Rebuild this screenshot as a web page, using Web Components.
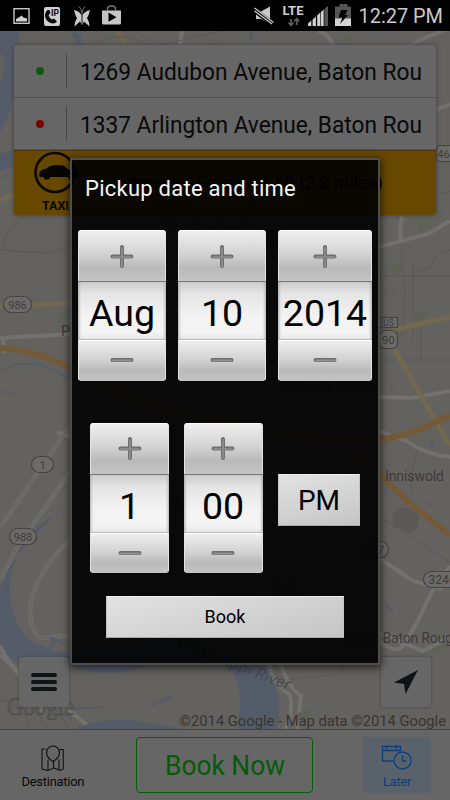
<!DOCTYPE html>
<html lang="en">
<head>
<meta charset="utf-8">
<title>Pickup date and time</title>
<style>
html,body{margin:0;width:450px;height:800px;overflow:hidden;background:#000;font-family:Roboto,"Noto Sans",sans-serif}
</style>
</head>
<body>
<taxi-screen></taxi-screen>
<script>
const define = (name, html, setup) => customElements.define(name, class extends HTMLElement {
  connectedCallback() {
    if (this.shadowRoot) return;
    const t = document.createElement('template');
    t.innerHTML = html;
    this.attachShadow({mode: 'open'}).append(t.content.cloneNode(true));
    if (setup) setup(this, this.shadowRoot);
  }
});

define('status-bar', `
<style>
:host{display:block;height:31px;background:#000}
svg{display:block}
</style>
<svg width="450" height="31" font-family="Roboto,sans-serif">
  <rect x="14" y="8.700" width="15" height="14.600" fill="none" stroke="#c6c6c6" stroke-width="1.400"/>
  <path d="M16 21.500V19l3-1.500 2.500-2 2 2 3.500 1v3z" fill="#d2d2d2"/>
  <rect x="44" y="7" width="16" height="19" rx="2" fill="#cfcfcf"/>
  <path d="M47.500 10c-3.500 3-3.500 8.500 1 11.800 3 2.200 6.500 2.200 8.500-.3l-3-3-2 1c-2-1-3.300-2.700-3.300-4.700l1.800-1.500-1-3.300z" fill="#080808"/>
  <text x="51" y="15.500" font-size="8.500" font-weight="700" textLength="8" fill="#080808">IP</text>
  <path d="M74 10q5 1 7.500 5V24.500l-1.500-3-5.500 5q0-5 2.500-8.500-2-3-3-8zM90 10q-5 1-7.500 5v9.500l1.500-3 5.500 5q0-5-2.500-8.500 2-3 3-8z" fill="#c9c9c9"/>
  <path d="M82 25V12M81.500 12q0-4.500-3-5.500M82.500 12q0-4.500 3-5.500" stroke="#717171" fill="none"/>
  <path d="M102 10.500h19v12.500q0 1.500-1.500 1.500h-16q-1.500 0-1.500-1.500z" fill="#c5c5c5"/>
  <path d="M107.500 11V9q0-3 4-3t4 3v2" stroke="#777" stroke-width="1.400" fill="none"/>
  <path d="M108.500 12.500l8 4.700-8 4.500z" fill="#000"/>
  <path d="M256 11.500h5l9-5v17.500l-9-5h-5z" fill="#cacaca"/>
  <path d="M253.500 9.500l20 15" stroke="#000" stroke-width="5"/>
  <path d="M254.500 8l19 14.500M254.500 11l17.500 13" stroke="#cacaca" stroke-width="1.300"/>
  <text x="282.500" y="15" font-size="13" font-weight="700" textLength="21" lengthAdjust="spacingAndGlyphs" fill="#d0d0d0">LTE</text>
  <path d="M291 19v6M288.500 22.500l2.500 3 2.500-3M296.800 25v-6M294.300 21.500l2.500-3 2.500 3" stroke="#5c5c5c" stroke-width="1.700" fill="none"/>
  <path d="M308 26v-2.500l3.300-3V26zM312.600 26v-6.500l3.300-3V26zM317.200 26V15.300l3.100-2.800V26zM320.900 26V12l2.800-2.600V26z" fill="#d0d0d0"/>
  <path d="M324.400 26V9l3.600-3.200V26z" fill="#555"/>
  <path d="M335 6.500h4.500V4h8v2.500h3.500v13h-16z" fill="#555"/>
  <path d="M335 18.500h16V26h-16z" fill="#d3d3d3"/>
  <path d="M341 10h6.500l-2.500 5h3l-8 9 2.500-6.500h-4z" fill="#050505"/>
  <text x="358.500" y="23" font-size="21" textLength="84.500" lengthAdjust="spacingAndGlyphs" fill="#cacaca">12:27 PM</text>
</svg>`);

define('city-map', `
<style>
:host{display:block;height:698px;background:#64625e}
svg{display:block}
.w{stroke:#72716e;fill:none;stroke-width:4}
.wi{stroke:#696765;fill:none;stroke-width:2}
.t{stroke:#5b5957;fill:none;stroke-width:1}
.r{fill:#555c69}
.y{stroke:#70694f;fill:none;stroke-width:5}
.o{stroke:#745a39;fill:none;stroke-width:6}
.g{fill:#5c6254}
.s rect{fill:#6c6b69;stroke:#454442;stroke-width:1.200}
text{fill:#3d3c3a}
</style>
<svg width="450" height="698" viewBox="0 31 450 698" font-family="Roboto,sans-serif">
  <path class="r" d="M0 31h20C15 55 20 105 0 132z"/>
  <path d="M0 52q7 8 2 26l-2 4z" fill="#64625e"/>
  <path class="r" d="M0 154l15-5v17l-15 5z"/>
  <path d="M73 31q7 20 27 25" stroke="#555c69" stroke-width="5" fill="none"/>
  <path d="M0 201l16-8" class="y"/>
  <path d="M0 179l20-8" stroke="#555c69" fill="none"/>
  <path d="M117 31q8 10 11 24" class="y"/>
  <path d="M182 31l-4 27M318 31q14 3 18 25M400 58q0-12 50-30M430 112l20-8" class="w"/>
  <path d="M90 45q28-16 60 0t70-5M140 35l20 10 65-15" class="t"/>
  <path class="g" d="M344 36h8l-3 5h-9z"/>
  <path class="t" d="M22 216l-16 19q-5 8 3 16l41 2 20-6M0 250h10"/>
  <path class="y" d="M0 307l72-4q100 0 165 22t153 6"/>
  <path class="w" d="M0 338l72-4h80M3 338l1 15"/>
  <path class="o" d="M0 348q40 3 72 21 80 48 175 55 70 20 134 15"/>
  <path d="M0 371q35-19 72 11" fill="none" stroke="#555c69" stroke-width="1.500"/>
  <path d="M0 391l14 4" fill="none" stroke="#555c69" stroke-width="1.500"/>
  <path class="w" d="M0 528l42-62 30-43M57 432l14 5M0 580l21-40 24-32 20-29 9-12"/>
  <path class="wi" d="M0 528l42-62 30-43M0 580l21-40 24-32 20-29 9-12"/>
  <path class="r" d="M72 498C37 534 10 555 0 590v58q12 17 40 18h30q45 16 90-5l65 5q22 15 12 63h40q12-62-40-77l-80-10-100 10-30-13q-25-30-13-75 12-38 43-49z"/>
  <path class="w" d="M76 537q-25 15-40 49-9 20-4 39 3 13 11 13l28-3"/>
  <path class="wi" d="M76 537q-25 15-40 49-9 20-4 39 3 13 11 13l28-3"/>
  <path class="w" d="M0 646q18 36 42 45 22 15 50 38M0 655q35 27 44 60"/>
  <path class="t" d="M0 700q25 4 30 29M15 700q12-7 33 29M30 692q25 10 38 36"/>
  <path d="M45 653l10-9-4-6 14 6M60 710l12 10M73 709l28-2M152 705l17-8-8 7 12-8" stroke="#555c69" stroke-width="2" fill="none"/>
  <path class="r" d="M75 729q30-15 75-6l33 6z"/>
  <path class="w" d="M270 659q-3 21 20 36 4 20-5 34M279 660q9 28 22 36l-4 33"/>
  <path class="t" d="M290 679l45-4q10-3 9-14"/>
  <path class="g" d="M297 713l15-4-3 9-11 3zM430 648l15-3-7 9zM388 266l14-3v10l-11 2zM391 287l4-3 2 8-5 2zM414 314l12-4 3 7-13 6zM416 219l7-2 5 7-8 9zM58 313l14-2v7l-12 1z"/>
  <path class="w" d="M402 216q-3 13-1 24M375 248l53-14 22-13M375 397l37 1 38-7M375 429q17 7 31 12 18 13 44 16M375 556q24 15 38 25l30 8M450 566q-20 25-29 49-12 23-21 34-12 2-25-12M448 638l-25 13-47-19"/>
  <path class="t" d="M402 246v20l3 25-3 46M413 262v80M375 276h75M421 322v38M375 360h75M375 354q7 20 20 40M375 514l75 48M450 250q-17 1-19 18l-20 5M418 449q-8 22-6 43M420 171q10 30 30 20"/>
  <path class="y" d="M390 331l60-14M392 345l24 42 34 59"/>
  <path class="o" d="M345 452q15 2 62 49l43 34"/>
  <path class="o" d="M381 439q30-3 69-24M381 439h12"/>
  <path d="M393 515q6-8 14-8l13 8-3 14-8 5-15-9z" fill="#5a5957"/>
  <path class="r" d="M428 447l4-8 4 8zM77 34h4v6h-4zM249 32h4v8h-4zM429 448l5 4zM384 603l6 3 3 6-4-2zM404 620l8 7-3-1M425 504l6-2 3 6-4-3M440 213l3 4-4 1z"/>
  <path d="M437 520q-6 15 0 38M445 160q-9 26-3 45" stroke-dasharray="5 3" fill="none" stroke="#5a616a"/>
  <g class="s" font-size="11" text-anchor="middle">
    <rect x="3.500" y="296.500" width="28" height="16" rx="8"/><text x="17.500" y="308.500">986</text>
    <rect x="31.500" y="456.500" width="22" height="16" rx="8"/><text x="42.500" y="468.500">1</text>
    <rect x="9.500" y="528.500" width="27" height="16" rx="8"/><text x="23" y="540.500">988</text>
    <rect x="436.500" y="145.500" width="28" height="16" rx="4"/><text x="443.500" y="157.500">46</text>
    <rect x="370.500" y="317.500" width="27" height="10"/><text x="386" y="326" font-size="8.500">BUS</text>
    <rect x="379.500" y="330.500" width="18" height="18" rx="5"/><text x="388.500" y="343.500">90</text>
    <rect x="361.500" y="541.500" width="27" height="16" rx="8"/><text x="375" y="553.500">427</text>
    <rect x="275.500" y="574.500" width="20" height="16" rx="8"/><text x="286" y="586.500">42</text>
    <rect x="423.500" y="571.500" width="34" height="16" rx="8"/><text x="442" y="583.500" font-size="12">3246</text>
  </g>
  <g font-size="14" style="--c:#42413f">
    <text x="61" y="335.500">Port Allen</text>
    <text x="164" y="233">Mid City North</text>
    <text x="282" y="389">Mid City South</text>
    <text x="154" y="506">Park</text>
    <text x="385" y="481" textLength="59">Inniswold</text>
    <text x="344" y="643" textLength="116">South Baton Rouge</text>
    <text transform="translate(173 646) rotate(21)" x="0" y="0" font-size="16" font-style="italic" textLength="123" style="fill:#454b55">Mississippi River</text>
  </g>
  <text x="7" y="715" font-family="Liberation Serif,serif" font-size="25" textLength="67" lengthAdjust="spacingAndGlyphs" style="fill:#5d5b59;stroke:#4a4948;stroke-width:.6">Google</text>
  <text x="179.500" y="726" font-size="15" textLength="266.500" lengthAdjust="spacingAndGlyphs" style="fill:#363533">©2014 Google - Map data ©2014 Google</text>
</svg>`);

define('address-row', `
<style>
:host{display:flex;align-items:center;height:52px;border-bottom:1px solid #505050;box-sizing:border-box;width:422px}
i{width:8px;height:8px;border-radius:50%;background:var(--dot);margin-left:22px}
b{width:1px;height:35px;background:#474747;margin-left:22px}
svg{margin-left:12px}
</style>
<i></i><b></b><svg width="345" height="34"><text y="26" x="1" font-size="23.300" fill="#090909" font-family="Roboto,sans-serif" lengthAdjust="spacingAndGlyphs"></text></svg>`,
(el, r) => {
  const t = r.querySelector('text');
  t.textContent = el.getAttribute('address');
  t.setAttribute('textLength', '342');
});

define('fare-banner', `
<style>
:host{display:block;height:65px;background:#664800;border-radius:0 0 3px 3px;box-shadow:inset 0 1px #503711}
svg{display:block}
</style>
<svg width="422" height="65" font-family="Roboto,sans-serif">
  <circle cx="41" cy="22.500" r="19.500" fill="none" stroke="#0b0800" stroke-width="2.600"/>
  <path d="M25.500 27q-1-5 2-7l5-1.500q4-3.500 9-3.500l8 .5 5 4 8 1.500q4 1.500 2 6h-4a3 3 0 0 1-6 0H36a3.300 3.300 0 0 1-6.500 0z" fill="#080600"/>
  <text x="28" y="60" font-size="12.500" font-weight="700" textLength="27" fill="#0c0900">TAXI</text>
  <text x="98" y="39" font-size="18.500" textLength="271" fill="#0a0700">Estimated Fare: $11.60 (2.8 miles)</text>
</svg>`);

define('trip-card', `
<style>:host{display:block;width:422px;height:170px;background:#666;border-radius:3px;box-shadow:0 0 4px #3b3a38}
address-row:nth-of-type(1){height:53px}</style>
<address-row address="1269 Audubon Avenue, Baton Rou" style="--dot:#0b5b0b"></address-row>
<address-row address="1337 Arlington Avenue, Baton Rou" style="--dot:#7a0505"></address-row>
<fare-banner></fare-banner>`);

define('map-button', `
<style>:host{display:grid;place-items:center;width:50px;height:50px;background:#666;border-radius:3px;box-shadow:0 0 3px #42413f}</style><slot></slot>`);

define('nav-bar', `
<style>
:host{display:flex;align-items:center;box-sizing:border-box;height:71px;border-top:1px solid #444;background:#666}
.later{margin-left:50px;width:68px;height:56px;background:#59626b;border-radius:2px}
.go{box-sizing:border-box;width:177px;height:56px;border:1.500px solid #0b5b0b;border-radius:4px;margin-left:30px}
svg{display:block}
</style>
<svg width="106" height="70" font-family="Roboto,sans-serif">
  <path d="M45.500 19h-3.500v20l6 1.500 6-2.500 6 2.500 3.200-1.500V19.500H60M48 40V29.500M53.500 38v-7M59 40V29.500" fill="none" stroke="#111" stroke-width="1.100"/>
  <path d="M53 31.500q-6.500-4-6.500-9a6.500 6.500 0 0 1 13 0q0 5-6.500 9z" fill="#666" stroke="#111" stroke-width="1.200"/>
  <text x="21.500" y="56" font-size="13" textLength="63" fill="#0a0a0a">Destination</text>
</svg>
<div class="go"><svg width="174" height="53"><text x="28" y="37" font-family="Roboto,sans-serif" font-size="27" textLength="120" lengthAdjust="spacingAndGlyphs" fill="#075b07">Book Now</text></svg></div>
<div class="later"><svg width="68" height="56" font-family="Roboto,sans-serif" fill="none" stroke="#0c3f7c" stroke-width="1.300">
  <path d="M30 24H19.500V9.500h18V14M19.500 13.500h18M23.500 8v4M33.500 8v4"/>
  <circle cx="39.500" cy="23.500" r="8.500"/><path d="M39.500 18v6h4"/>
  <text x="20" y="49" font-size="13" textLength="28.500" fill="#0c3f7c" stroke="none">Later</text>
</svg></div>`);

define('number-picker', `
<style>
:host{display:grid;grid-template-rows:52px 57px 41.500px;width:var(--w,88px);height:150.500px;border-radius:4px;overflow:hidden;background:#ddd}
svg{display:block}
.plus,.minus{background:linear-gradient(#f0f0f0,#d2d2d2 48%,#b9b9b9 74%,#c5c5c5);box-shadow:inset 1px 0 #e4e4e4,inset -1px 0 #e4e4e4,inset 0 1px #fff;display:grid;place-items:center}
.plus{border-bottom:1px solid #777;box-sizing:border-box}
.minus{border-top:1px solid #bbb;box-sizing:border-box}
.value{background:linear-gradient(#ccc,#e4e4e4 20%,#f3f3f3 60%,#f4f4f4 88%,#e9e9e9);box-shadow:inset 3px 0 3px -2px #aaa,inset -3px 0 3px -2px #aaa;text-align:center;font-size:37.500px;line-height:62px;height:57px;color:#000;white-space:nowrap}
</style>
<div class="plus"><svg width="24" height="24" viewBox="0 0 24 24"><path d="M12 3v19M2.500 12.500h19" stroke="#6f6f6f" stroke-width="4" stroke-linecap="round"/><path d="M12 4v18M3 13h18" stroke="#898989" stroke-width="2.200" stroke-linecap="round"/></svg></div>
<div class="value"><slot></slot></div>
<div class="minus"><svg width="24" height="8" viewBox="0 0 24 8"><path d="M2.500 4h19" stroke="#6f6f6f" stroke-width="4" stroke-linecap="round"/><path d="M3 4.500h18" stroke="#929292" stroke-width="2.200" stroke-linecap="round"/></svg></div>`);

define('push-button', `
<style>:host{display:grid;place-items:center;box-sizing:border-box;border:1px solid #c4c4c4;border-top-color:#ededed;border-bottom-color:#a8a8a8;background:linear-gradient(165deg,#e2e2e2,#c5c5c5);color:#000}</style><span><slot></slot></span>`);

define('pickup-dialog', `
<style>
:host{display:flex;flex-direction:column;box-sizing:border-box;width:310px;height:507px;border:2px solid #4d4d4d;background:rgba(0,0,0,.9);box-shadow:0 2px 8px 1px rgba(0,0,0,.65)}
h1{font-weight:400;font-size:22px;line-height:26px;margin:16px 0 0 13px;color:#f5f5f5;height:54px;letter-spacing:.25px}
.date{display:flex;gap:12px;margin-left:6px}
.time{display:flex;gap:14.500px;margin:42px 0 0 18px;align-items:center}
.pm{width:82px;height:52px;font-size:28px;margin:5px 0 0 1px}
.book{width:238px;height:42px;margin:22.500px 0 0 34px;font-size:18px}
</style>
<h1>Pickup date and time</h1>
<div class="date"><number-picker>Aug</number-picker><number-picker>10</number-picker><number-picker style="--w:94px">2014</number-picker></div>
<div class="time"><number-picker style="--w:79px">1</number-picker><number-picker style="--w:79px">00</number-picker><push-button class="pm">PM</push-button></div>
<push-button class="book">Book</push-button>`);

define('taxi-screen', `
<style>
:host{display:grid;grid-template-rows:31px 698px 71px;width:450px;height:800px;position:relative;overflow:hidden}
.stage{display:grid}
.stage>*{grid-area:1/1}
.over{display:flex;flex-direction:column;justify-content:space-between;padding:14px 14px 22px;box-sizing:border-box;height:698px}
.tools{display:flex;justify-content:space-between;padding:0 5px}
pickup-dialog{position:absolute;left:70px;top:158px}
</style>
<status-bar></status-bar>
<div class="stage"><city-map></city-map>
 <div class="over"><trip-card></trip-card>
  <div class="tools">
   <map-button><svg width="28" height="22"><path d="M3 4h22M3 11h22M3 18h22" stroke="#101414" stroke-width="4" stroke-linecap="round"/></svg></map-button>
   <map-button><svg width="26" height="26"><path d="M25 1L1 13.500l10 1.500 1.500 10z" fill="#101113"/></svg></map-button>
  </div>
 </div>
</div>
<nav-bar></nav-bar>
<pickup-dialog></pickup-dialog>`);
</script>
</body>
</html>
